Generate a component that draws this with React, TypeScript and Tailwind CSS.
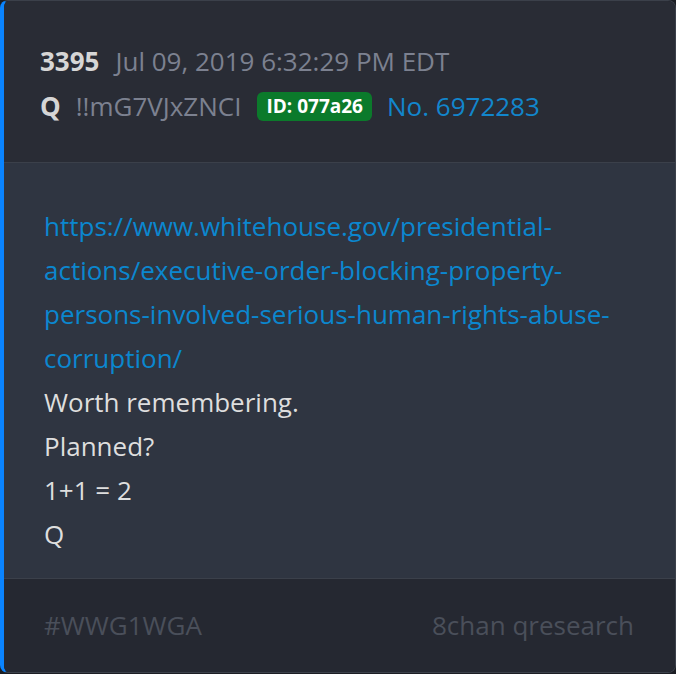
import React from "react";

export default function App() {
  const font = { fontFamily: '"Open Sans", "Noto Sans", sans-serif' };
  return (
    <div className="w-[676px] h-[674px] bg-[#1c1e24]" style={font}>
      <div className="w-full h-[673px] rounded-[8px] border border-[#3b404a] border-l-4 border-l-[#0a84ff] overflow-hidden flex flex-col">
        <div className="bg-[#292c35] pl-[36px] pt-[38px] pb-[33px] border-b border-[#3b404a] text-[26px] leading-[45px]">
          <div className="flex items-center">
            <span className="font-bold text-[#d6d6d6]">3395</span>
            <span className="ml-[16px] text-[#7c8190]">Jul 09, 2019 6:32:29 PM EDT</span>
          </div>
          <div className="flex items-center">
            <span className="font-bold text-[#d6d6d6]">Q</span>
            <span className="ml-[15px] text-[#7c8190]">!!mG7VJxZNCI</span>
            <span className="ml-[16px] h-[29px] px-[9px] rounded-[6px] bg-[#0b7a2b] text-white font-bold text-[19px] leading-[29px]">
              ID: 077a26
            </span>
            <span className="ml-[15px] text-[#1286cc]">No. 6972283</span>
          </div>
        </div>
        <div className="bg-[#2f3541] pl-[40px] pr-[50px] pt-[41px] pb-[22px] border-b border-[#3b404a] text-[26px] leading-[44px] text-[#dedede]">
          <div className="text-[#0b87cf]">
            https://www.whitehouse.gov/presidential-actions/executive-order-blocking-property-persons-involved-serious-human-rights-abuse-corruption/
          </div>
          <div>Worth remembering.</div>
          <div>Planned?</div>
          <div>1+1 = 2</div>
          <div>Q</div>
        </div>
        <div className="flex-1 bg-[#252831] pl-[40px] pr-[41px] flex items-center justify-between text-[26px] text-[#4a4f5a]">
          <span>#WWG1WGA</span>
          <span>8chan qresearch</span>
        </div>
      </div>
    </div>
  );
}
